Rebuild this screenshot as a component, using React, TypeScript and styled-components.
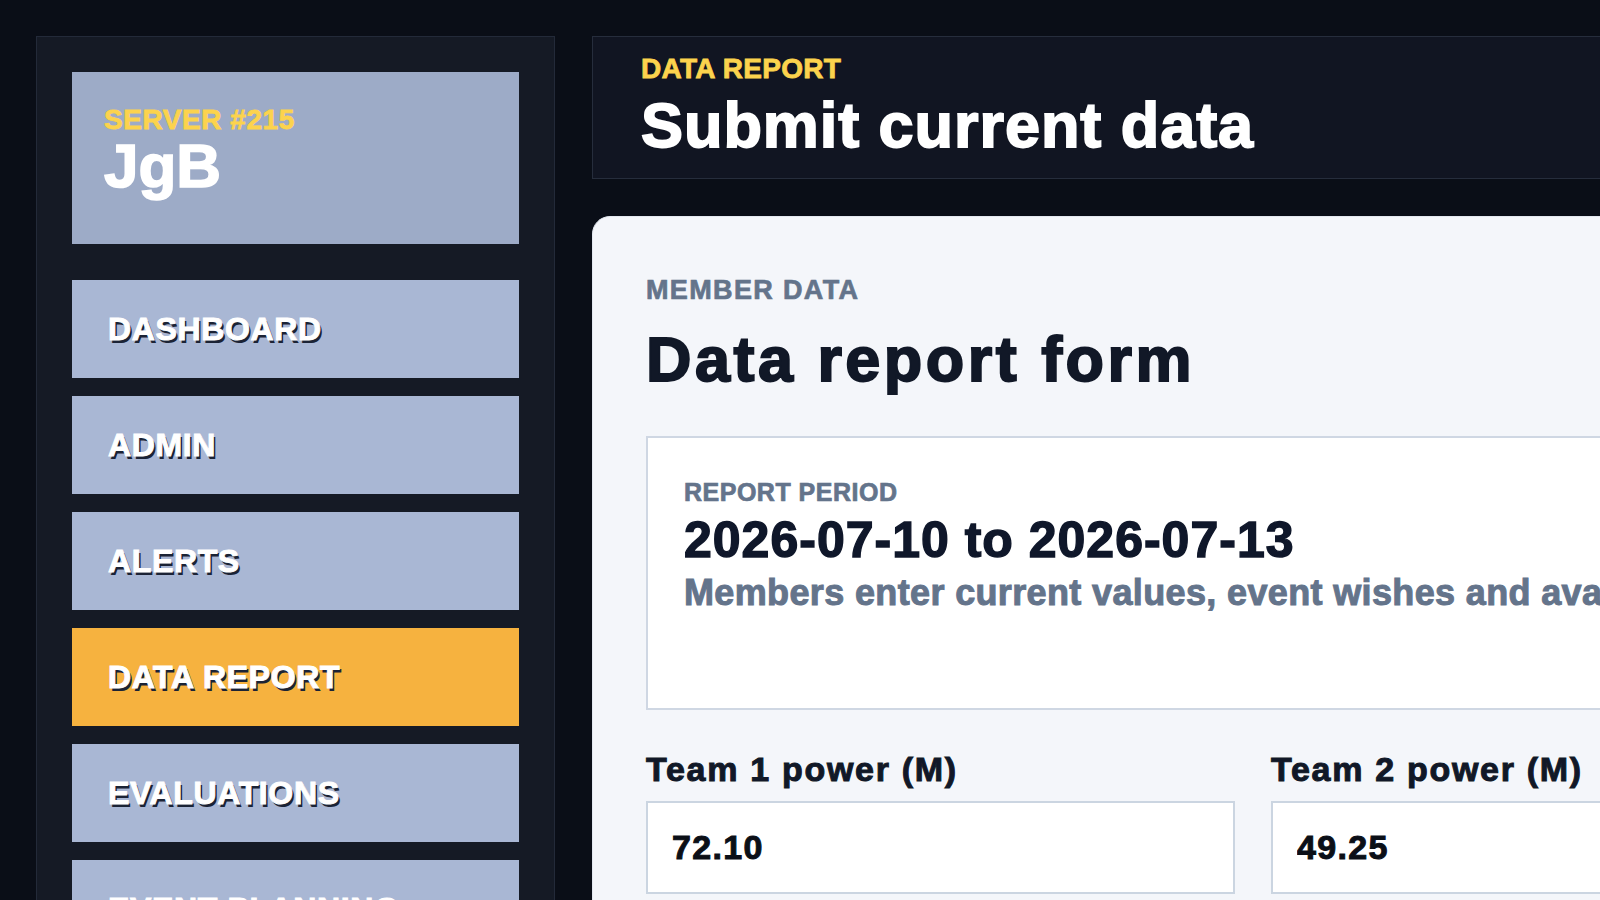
import React from "react";
import styled, { createGlobalStyle } from "styled-components";

const GlobalStyle = createGlobalStyle`
  html, body {
    margin: 0;
    padding: 0;
    background: #0a0e17;
    overflow: hidden;
  }
  body {
    font-family: "Liberation Sans", Arial, Helvetica, sans-serif;
    font-weight: 700;
  }
  * { box-sizing: border-box; }
`;

const Page = styled.div`
  display: grid;
  grid-template-columns: 519px 1fr;
  column-gap: 37px;
  align-items: start;
  width: 2400px;
  min-height: 1200px;
  padding: 36px;
`;

const Sidebar = styled.aside`
  background: #151a25;
  border: 1px solid #232a39;
  padding: 35px;
  display: flex;
  flex-direction: column;
  gap: 36px;
  min-height: 1100px;
`;

const ServerCard = styled.div`
  background: #9dabc7;
  height: 172px;
  padding: 34px 32px;
  display: flex;
  flex-direction: column;
`;

const ServerLabel = styled.div`
  color: #fcd34d;
  font-size: 28px;
  line-height: 1.03;
  letter-spacing: 0.02em;
  -webkit-text-stroke: 0.8px currentColor;
`;

const ServerName = styled.div`
  color: #ffffff;
  font-size: 62px;
  line-height: 1;
  -webkit-text-stroke: 1.6px currentColor;
`;

const Nav = styled.nav`
  display: flex;
  flex-direction: column;
  gap: 18px;
`;

const NavItem = styled.a<{ $active?: boolean }>`
  display: flex;
  align-items: center;
  height: 98px;
  padding: 0 36px;
  background: ${(p) => (p.$active ? "#f6b23f" : "#a9b7d4")};
  color: #ffffff;
  font-size: 32px;
  letter-spacing: 0.02em;
  text-transform: uppercase;
  text-decoration: none;
  text-shadow: 2px 3px 0 #1b2335;
  -webkit-text-stroke: 1px currentColor;
  cursor: pointer;
`;

const Main = styled.main`
  display: flex;
  flex-direction: column;
  gap: 37px;
  min-width: 0;
`;

const Header = styled.header`
  background: #111522;
  border: 1px solid #262d3c;
  padding: 15px 48px 18px;
  display: flex;
  flex-direction: column;
  gap: 5px;
`;

const Eyebrow = styled.div`
  color: #fcd34d;
  font-size: 28px;
  line-height: 1.2;
  letter-spacing: 0.01em;
  -webkit-text-stroke: 0.8px currentColor;
`;

const PageTitle = styled.h1`
  margin: 0;
  color: #ffffff;
  font-size: 63px;
  line-height: 1.1;
  font-weight: 700;
  letter-spacing: 0.015em;
  -webkit-text-stroke: 1.8px currentColor;
`;

const Card = styled.section`
  background: #f4f6fa;
  border: 1px solid #e3e8f0;
  border-radius: 18px;
  padding: 57px 53px 54px;
  min-height: 900px;
  display: flex;
  flex-direction: column;
`;

const SectionLabel = styled.div<{ $size?: number; $spacing?: number }>`
  color: #64748b;
  font-size: ${(p) => p.$size ?? 26}px;
  line-height: 1.2;
  letter-spacing: ${(p) => p.$spacing ?? 0.04}em;
  text-transform: uppercase;
  -webkit-text-stroke: 0.7px currentColor;
`;

const FormTitle = styled.h2`
  margin: 19px 0 0;
  color: #111827;
  font-size: 63px;
  line-height: 1.1;
  font-weight: 700;
  letter-spacing: 0.055em;
  -webkit-text-stroke: 1.9px currentColor;
`;

const PeriodBox = styled.div`
  margin-top: 41px;
  background: #ffffff;
  border: 2px solid #cfd7e3;
  min-height: 274px;
  padding: 39px 36px 30px;
  display: flex;
  flex-direction: column;
`;

const PeriodRange = styled.div`
  color: #0f172a;
  font-size: 50px;
  line-height: 1.15;
  margin-top: 5px;
  letter-spacing: 0.02em;
  -webkit-text-stroke: 1.4px currentColor;
`;

const PeriodNote = styled.div`
  color: #64748b;
  font-size: 36px;
  line-height: 1.3;
  margin-top: 1px;
  white-space: nowrap;
  letter-spacing: 0.01em;
  -webkit-text-stroke: 1px currentColor;
`;

const FieldGrid = styled.div`
  margin-top: 39px;
  display: grid;
  grid-template-columns: repeat(3, 589px);
  column-gap: 36px;
`;

const Field = styled.label`
  display: flex;
  flex-direction: column;
  gap: 12px;
`;

const FieldLabel = styled.span`
  color: #111827;
  font-size: 34px;
  line-height: 1.2;
  letter-spacing: 0.05em;
  -webkit-text-stroke: 1px currentColor;
`;

const Input = styled.input`
  height: 93px;
  border: 2px solid #cbd5e1;
  background: #ffffff;
  padding: 0 24px;
  font-family: "Liberation Sans", Arial, Helvetica, sans-serif;
  font-weight: 700;
  font-size: 34px;
  letter-spacing: 0.04em;
  color: #0b0f17;
  outline: none;
  border-radius: 0;
  -webkit-text-stroke: 1px currentColor;
`;

const navItems = [
  "Dashboard",
  "Admin",
  "Alerts",
  "Data report",
  "Evaluations",
  "Event planning",
  "Members",
];

export default function App() {
  return (
    <>
      <GlobalStyle />
      <Page>
        <Sidebar>
          <ServerCard>
            <ServerLabel>SERVER #215</ServerLabel>
            <ServerName>JgB</ServerName>
          </ServerCard>
          <Nav>
            {navItems.map((item) => (
              <NavItem key={item} $active={item === "Data report"}>
                {item}
              </NavItem>
            ))}
          </Nav>
        </Sidebar>
        <Main>
          <Header>
            <Eyebrow>DATA REPORT</Eyebrow>
            <PageTitle>Submit current data</PageTitle>
          </Header>
          <Card>
            <SectionLabel $size={27} $spacing={0.05}>
              Member data
            </SectionLabel>
            <FormTitle>Data report form</FormTitle>
            <PeriodBox>
              <SectionLabel $size={25} $spacing={0.02}>
                Report period
              </SectionLabel>
              <PeriodRange>2026-07-10 to 2026-07-13</PeriodRange>
              <PeriodNote>
                Members enter current values, event wishes and availability for the period.
              </PeriodNote>
            </PeriodBox>
            <FieldGrid>
              <Field>
                <FieldLabel>Team 1 power (M)</FieldLabel>
                <Input defaultValue="72.10" />
              </Field>
              <Field>
                <FieldLabel>Team 2 power (M)</FieldLabel>
                <Input defaultValue="49.25" />
              </Field>
              <Field>
                <FieldLabel>Team 3 power (M)</FieldLabel>
                <Input defaultValue="31.80" />
              </Field>
            </FieldGrid>
          </Card>
        </Main>
      </Page>
    </>
  );
}
